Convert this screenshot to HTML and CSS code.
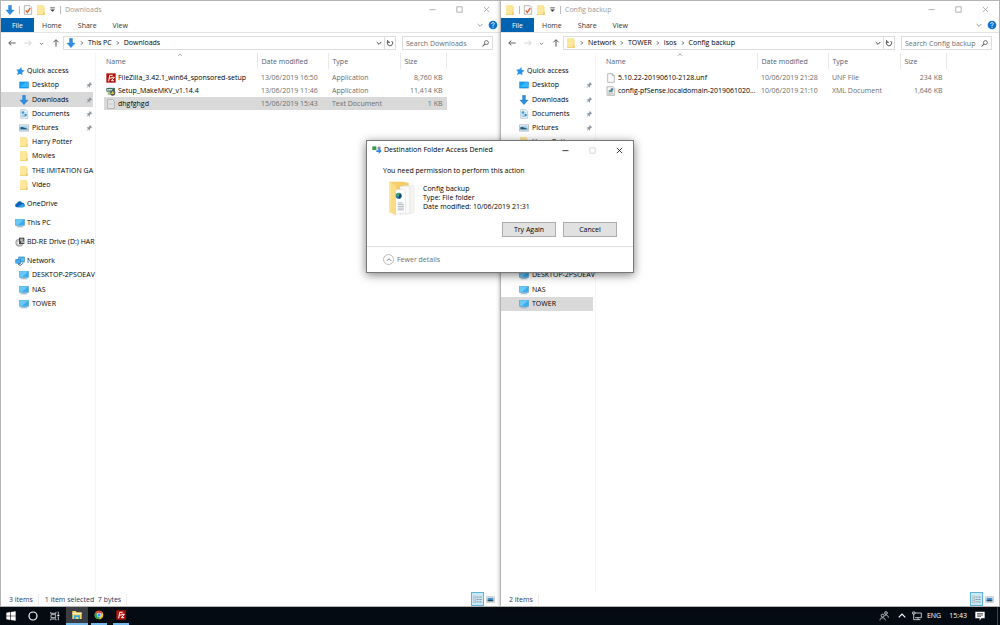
FILE: index.html
```html
<!DOCTYPE html>
<html lang="en">
<head>
<meta charset="utf-8">
<meta name="viewport" content="width=device-width, initial-scale=1">
<title>Destination Folder Access Denied</title>
<link rel="stylesheet" href="styles.css">
</head>
<body>
<svg class="defs" aria-hidden="true">
  <symbol id="i-down" viewBox="0 0 30 30"><path d="M10.500 1h9v14h8L15 29 2.500 15h8z" fill="#2f8de0" stroke="#1c74c4" stroke-width="1"/></symbol>
  <symbol id="i-check" viewBox="0 0 30 30"><path d="M4 2h17l5 5v21H4z" fill="#fafafa" stroke="#999" stroke-width="2"/><path d="M8 16l5 6 9-13" fill="none" stroke="#e2622d" stroke-width="4"/></symbol>
  <symbol id="i-folder" viewBox="0 0 30 30"><path d="M3 1h20v4h3v24H3z" fill="#fbdf88"/><path d="M3 1h19v21l4 5v2H3z" fill="#fde79b"/><path d="M3 28h23v1.500H3zM22 20l4 4v5h-4z" fill="#e9c257"/></symbol>
  <symbol id="i-more" viewBox="0 0 30 30"><path d="M5 6h20v4H5zM5 15h20L15 25z" fill="#333"/></symbol>
  <symbol id="i-min" viewBox="0 0 30 30"><path d="M5 15.500h20" stroke="currentColor" stroke-width="2.500"/></symbol>
  <symbol id="i-max" viewBox="0 0 30 30"><path d="M6 6h18v18H6z" fill="none" stroke="currentColor" stroke-width="2.500"/></symbol>
  <symbol id="i-close" viewBox="0 0 30 30"><path d="M6 6l18 18M24 6L6 24" fill="none" stroke="currentColor" stroke-width="2.500"/></symbol>
  <symbol id="i-chev-down" viewBox="0 0 30 30"><path d="M8 12l7 7 7-7" fill="none" stroke="currentColor" stroke-width="3"/></symbol>
  <symbol id="i-chev-up" viewBox="0 0 30 30"><path d="M8 18l7-7 7 7" fill="none" stroke="currentColor" stroke-width="2.500"/></symbol>
  <symbol id="i-chev-right" viewBox="0 0 12 30"><path d="M3 10l5 5-5 5" fill="none" stroke="#444" stroke-width="2.500"/></symbol>
  <symbol id="i-back" viewBox="0 0 30 30"><path d="M26 15H6M13 8l-8 7 8 7" fill="none" stroke="currentColor" stroke-width="2.800"/></symbol>
  <symbol id="i-fwd" viewBox="0 0 30 30"><path d="M4 15h20M17 8l8 7-8 7" fill="none" stroke="currentColor" stroke-width="2.500"/></symbol>
  <symbol id="i-up" viewBox="0 0 30 30"><path d="M15 26V6M7 13l8-8 8 8" fill="none" stroke="currentColor" stroke-width="3"/></symbol>
  <symbol id="i-help" viewBox="0 0 30 30"><circle cx="15" cy="15" r="13" fill="#0f74cf"/><path d="M11 12c0-6 8-5 8-1 0 3-4 3-4 7M15 20v3" fill="none" stroke="#fff" stroke-width="2.800"/></symbol>
  <symbol id="i-refresh" viewBox="0 0 30 30"><path d="M20 9a8 8 0 1 1-10 0M8 6v7h7" fill="none" stroke="#555" stroke-width="3"/></symbol>
  <symbol id="i-search" viewBox="0 0 30 30"><circle cx="18" cy="12" r="6.500" fill="none" stroke="#555" stroke-width="2.800"/><path d="M13 17l-8 8" stroke="#555" stroke-width="3.500"/></symbol>
  <symbol id="i-star" viewBox="0 0 30 30"><path d="M19 3l1 8 9 3-7 5 0 9-7-5-9 4 3-9-5-7 9-1z" fill="#2b93e6"/></symbol>
  <symbol id="i-pin" viewBox="0 0 30 30"><path d="M17 3l10 10-4 1-4 4-1 7-5-5-8 8 6-10-5-5 7-1 4-4z" fill="#8b97a1"/></symbol>
  <symbol id="i-desktop" viewBox="0 0 30 30"><path d="M1 5h28v20H1z" fill="#0a84dc"/><path d="M3 7h24v15H3z" fill="#13a3f5"/><path d="M3 22L19 7h8v15z" fill="#35b6fb"/></symbol>
  <symbol id="i-docs" viewBox="0 0 30 30"><path d="M5 2h15l6 6v20H5z" fill="#eef6fb" stroke="#8ba4b4" stroke-width="1.500"/><path d="M8 7h8v7H8z" fill="#3799d5"/><path d="M8 18h14M8 22h14M18 12h4" stroke="#58a6d3" stroke-width="2"/><path d="M17 15h6v6h-6z" fill="#3a8cc7"/></symbol>
  <symbol id="i-pics" viewBox="0 0 30 30"><path d="M1.500 5.500h27v19h-27z" fill="#fff" stroke="#a0a8ad" stroke-width="2"/><path d="M4 8h22v8H4z" fill="#a4d3f2"/><path d="M4 13l6-1 16 5v2H4z" fill="#34566b"/><path d="M4 18h22v4H4z" fill="#6aa9d2"/></symbol>
  <symbol id="i-cloud" viewBox="0 0 30 30"><path d="M7 25a6 6 0 0 1-1-12 8 8 0 0 1 15-2 7 7 0 0 1 2 14z" fill="#0864b8"/><path d="M7 25l14-10c6-1 9 3 8 7-1 2-3 3-5 3z" fill="#2d9ce8"/></symbol>
  <symbol id="i-pc" viewBox="0 0 30 30"><path d="M1 3h28v20H1z" fill="#4b8fb9"/><path d="M2 4h26v17H2z" fill="#36aef0"/><path d="M2 4h26L9 21H2z" fill="#6bc9fa"/><path d="M13 23h5v2h7v3H5v-3h8z" fill="#8fb4cb"/></symbol>
  <symbol id="i-disc" viewBox="0 0 30 30"><circle cx="13" cy="17" r="11" fill="#c6c8c9" stroke="#888" stroke-width="2"/><circle cx="12" cy="18" r="4" fill="#fff"/><path d="M12 2h16v19H12z" fill="#444"/><path d="M15 5h10v8H15z" fill="#aaa"/><path d="M18 14h9v3h-9z" fill="#eee"/></symbol>
  <symbol id="i-net" viewBox="0 0 30 30"><path d="M10 2h19v17H10z" fill="#277cae"/><path d="M12 4h15v13H12z" fill="#54bbef"/><path d="M1 10l16-2v17L1 22z" fill="#2a7fba"/><path d="M3 12l12-2v12L3 20z" fill="#42aced"/><path d="M9 25l8 3 8-7" fill="none" stroke="#45728f" stroke-width="3"/></symbol>
  <symbol id="i-fz" viewBox="0 0 30 30"><path d="M1 1h28v28H1z" fill="#b3130b"/><path d="M8 25l3-18h9M9 15h8M16 13h9l-9 10h8" fill="none" stroke="#fff" stroke-width="3"/></symbol>
  <symbol id="i-mkv" viewBox="0 0 30 30"><path d="M6 2h17v26H6z" fill="#dde6e8"/><path d="M1 6h26v11H1z" fill="#46705c"/><path d="M5 14V9l3 4 3-4v5M14 9v5M19 9l-4 3 4 3" fill="none" stroke="#fff" stroke-width="2"/><circle cx="20" cy="21" r="8" fill="#555"/><path d="M15 15l10 0 0 6z" fill="#3a78bd"/><path d="M14 24l11 0-5-8z" fill="#edc83f"/><path d="M5 18h8v8H5z" fill="#9fc57c"/></symbol>
  <symbol id="i-file" viewBox="0 0 30 30"><path d="M5 2h14l6 6v20H5z" fill="#fbfbfb" stroke="#929292" stroke-width="1.800"/><path d="M19 2v6h6" fill="none" stroke="#929292" stroke-width="1.800"/></symbol>
  <symbol id="i-text" viewBox="0 0 30 30"><path d="M5 2h15l5 5v21H5z" fill="#eee" stroke="#929292" stroke-width="1.800"/><path d="M8 9h14M8 13h14M8 17h14M8 21h14" stroke="#bbb" stroke-width="1.500"/></symbol>
  <symbol id="i-xml" viewBox="0 0 30 30"><path d="M3 2h18l5 5v21H3z" fill="#f7f7f7" stroke="#929292" stroke-width="1.800"/><path d="M8 12h12v6H8z" fill="#5a9b93"/><path d="M14 7h8v6h-8z" fill="#5b7891"/><path d="M6 21h16M6 24h16" stroke="#888" stroke-width="1.500"/></symbol>
  <symbol id="i-details" viewBox="0 0 30 30"><path d="M2 4h7v5H2zM2 12h7v5H2zM2 20h7v5H2z" fill="#fff" stroke="#7d8d96" stroke-width="1.500"/><path d="M12 7h7M21 7h8M12 15h7M21 15h8M12 23h7M21 23h8" stroke="#54656e" stroke-width="2"/></symbol>
  <symbol id="i-thumbs" viewBox="0 0 30 30"><path d="M1.500 5.500h27v19h-27z" fill="#fff" stroke="#aaa" stroke-width="2"/><path d="M5 9h20v12H5z" fill="#4a92d1"/><path d="M5 18l10-3 10 4v2H5z" fill="#274c5c"/></symbol>
  <symbol id="i-copy" viewBox="0 0 30 30"><path d="M1 4h12v11H1z" fill="#3b9c48"/><path d="M14 7h4v6h-4z" fill="#b5bfc5"/><path d="M18 5h8v9h-8z" fill="#8d989e"/><path d="M13 16h7v-6l9 8-9 9v-6h-7z" fill="#2589dc"/></symbol>
  <symbol id="i-bigfolder" viewBox="0 0 78 102"><path d="M3 2h42l15 4v85H12L3 86z" fill="#f2cd68"/><path d="M45 14l28-1 3 3v76l-25 6z" fill="#f3f3f2" stroke="#ddd"/><path d="M35 15h23l5 6v73l-28 4z" fill="#fafafa" stroke="#ccc"/><path d="M22 25h22l7 6v61l-29 4z" fill="#fff" stroke="#c8c8c8"/><path d="M28 64h14M28 69h18M28 74h18M28 79h18M28 84h18" stroke="#8998a6" stroke-width="2"/><path d="M3 2l20 10v88L3 91z" fill="#fbdc84"/><path d="M3 2l4 2v89l-4-2z" fill="#fde9a9"/><circle cx="31" cy="43" r="9" fill="#1f78b5"/><path d="M25 37c4-4 8-2 8 2l-4 8-5-4z" fill="#48a95b"/><path d="M32 40l6-1-2 10-5 3z" fill="#123e66"/></symbol>
  <symbol id="i-win" viewBox="0 0 30 30"><path d="M1 5l12-2v11H1zM15 3l14-2v13H15zM1 16h12v11L1 25zM15 16h14v13l-14-2z" fill="#fff"/></symbol>
  <symbol id="i-cortana" viewBox="0 0 30 30"><circle cx="15" cy="15" r="12" fill="none" stroke="#fff" stroke-width="3.500"/></symbol>
  <symbol id="i-tasks" viewBox="0 0 30 30"><path d="M2 3v4h16V3M3 11h14v9H3zM2 28v-4h16v4M25 2v8M25 18v10" fill="none" stroke="#ddd" stroke-width="2.500"/><path d="M22 11h6v5h-6z" fill="#fff"/></symbol>
  <symbol id="i-explorer" viewBox="0 0 30 30"><path d="M1 3h10l3 4h15v20H1z" fill="#f8d568"/><path d="M1 9h28v3H1z" fill="#fff0b4"/><path d="M6 16h18v11h-5v-6h-8v6H6z" fill="#2da9e8"/></symbol>
  <symbol id="i-chrome" viewBox="0 0 30 30"><circle cx="15" cy="15" r="13" fill="#f7c72e"/><path d="M15 15L3.700 8.500A13 13 0 0 1 26.300 8.500z" fill="#dc4437"/><path d="M15 15L3.700 8.500A13 13 0 0 0 15 28l5-10z" fill="#30a451"/><circle cx="15" cy="15" r="6.500" fill="#fff"/><circle cx="15" cy="15" r="5" fill="#4586ef"/></symbol>
  <symbol id="i-people" viewBox="0 0 30 30"><circle cx="11" cy="14" r="4.500" fill="none" stroke="#ddd" stroke-width="2.500"/><path d="M3 28c0-10 15-10 16 0" fill="none" stroke="#ddd" stroke-width="2.500"/><circle cx="21" cy="6" r="4" fill="none" stroke="#ddd" stroke-width="2.500"/><path d="M17 14c6-4 11 0 11 6" fill="none" stroke="#ddd" stroke-width="2.500"/></symbol>
  <symbol id="i-lan" viewBox="0 0 30 30"><path d="M9 6h19v14H9M18 20v6M11 26h14M2 3h7v6H2zM5 9v17h6" fill="none" stroke="#ddd" stroke-width="2.500"/></symbol>
  <symbol id="i-notes" viewBox="0 0 30 30"><path d="M1 2h28v20H19l-5 7v-7H1z" fill="#fff"/><path d="M6 8h18M6 12h18M6 16h12" stroke="#222" stroke-width="2"/></symbol>
</svg>

<div class="screen">
  <main class="desktop">
    <section class="window" aria-label="Downloads">
      <header class="titlebar">
        <svg class="ico"><use href="#i-down"/></svg><span class="bar"></span>
        <svg class="ico"><use href="#i-check"/></svg><svg class="ico"><use href="#i-folder"/></svg><svg class="ico small"><use href="#i-more"/></svg><span class="bar"></span>
        <span class="caption">Downloads</span>
        <div class="controls"><button aria-label="Minimise"><svg class="ico"><use href="#i-min"/></svg></button><button aria-label="Maximise"><svg class="ico"><use href="#i-max"/></svg></button><button aria-label="Close"><svg class="ico"><use href="#i-close"/></svg></button></div>
      </header>
      <div class="ribbon">
        <button class="file">File</button><button>Home</button><button>Share</button><button>View</button>
        <span class="ribbon-end"><button class="plain" aria-label="Expand ribbon"><svg class="ico"><use href="#i-chev-down"/></svg></button><button class="plain" aria-label="Help"><svg class="ico"><use href="#i-help"/></svg></button></span>
      </div>
      <div class="addressbar">
        <div class="history"><button class="plain" aria-label="Back"><svg class="ico"><use href="#i-back"/></svg></button><button class="plain faint" aria-label="Forward"><svg class="ico"><use href="#i-fwd"/></svg></button><button class="plain" aria-label="Recent"><svg class="ico small"><use href="#i-chev-down"/></svg></button><button class="plain" aria-label="Up"><svg class="ico"><use href="#i-up"/></svg></button></div>
        <div class="path"><svg class="ico"><use href="#i-down"/></svg><svg class="sep"><use href="#i-chev-right"/></svg><a href="#">This PC</a><svg class="sep"><use href="#i-chev-right"/></svg><a href="#">Downloads</a>
          <span class="path-end"><button class="plain" aria-label="Previous locations"><svg class="ico"><use href="#i-chev-down"/></svg></button><button class="plain refresh" aria-label="Refresh"><svg class="ico"><use href="#i-refresh"/></svg></button></span></div>
        <label class="search"><input type="search" placeholder="Search Downloads" aria-label="Search Downloads"><svg class="ico"><use href="#i-search"/></svg></label>
      </div>
      <div class="body">
        <nav class="tree" aria-label="Folders">
          <div class="group quick">
            <a class="root" href="#"><svg class="ico"><use href="#i-star"/></svg><span>Quick access</span></a>
            <a href="#"><svg class="ico"><use href="#i-desktop"/></svg><span>Desktop</span><svg class="pin"><use href="#i-pin"/></svg></a>
            <a class="selected" href="#"><svg class="ico"><use href="#i-down"/></svg><span>Downloads</span><svg class="pin"><use href="#i-pin"/></svg></a>
            <a href="#"><svg class="ico"><use href="#i-docs"/></svg><span>Documents</span><svg class="pin"><use href="#i-pin"/></svg></a>
            <a href="#"><svg class="ico"><use href="#i-pics"/></svg><span>Pictures</span><svg class="pin"><use href="#i-pin"/></svg></a>
            <a href="#"><svg class="ico"><use href="#i-folder"/></svg><span>Harry Potter</span></a>
            <a href="#"><svg class="ico"><use href="#i-folder"/></svg><span>Movies</span></a>
            <a href="#"><svg class="ico"><use href="#i-folder"/></svg><span>THE IMITATION GA</span></a>
            <a href="#"><svg class="ico"><use href="#i-folder"/></svg><span>Video</span></a>
          </div>
          <div class="group"><a class="root" href="#"><svg class="ico"><use href="#i-cloud"/></svg><span>OneDrive</span></a></div>
          <div class="group"><a class="root" href="#"><svg class="ico"><use href="#i-pc"/></svg><span>This PC</span></a></div>
          <div class="group"><a class="root" href="#"><svg class="ico"><use href="#i-disc"/></svg><span>BD-RE Drive (D:) HAR</span></a></div>
          <div class="group network">
            <a class="root" href="#"><svg class="ico"><use href="#i-net"/></svg><span>Network</span></a>
            <a href="#"><svg class="ico"><use href="#i-pc"/></svg><span>DESKTOP-2PSOEAV</span></a>
            <a href="#"><svg class="ico"><use href="#i-pc"/></svg><span>NAS</span></a>
            <a href="#"><svg class="ico"><use href="#i-pc"/></svg><span>TOWER</span></a>
          </div>
        </nav>
        <div class="files">
          <table>
            <colgroup><col class="c-name"><col class="c-date"><col class="c-type"><col class="c-size"></colgroup>
            <thead><tr><th>Name<svg class="sort"><use href="#i-chev-up"/></svg></th><th>Date modified</th><th>Type</th><th>Size</th></tr></thead>
            <tbody>
              <tr><td><div class="name"><svg class="ico"><use href="#i-fz"/></svg><span>FileZilla_3.42.1_win64_sponsored-setup</span></div></td><td>13/06/2019 16:50</td><td>Application</td><td>8,760 KB</td></tr>
              <tr><td><div class="name"><svg class="ico"><use href="#i-mkv"/></svg><span>Setup_MakeMKV_v1.14.4</span></div></td><td>13/06/2019 11:46</td><td>Application</td><td>11,414 KB</td></tr>
              <tr class="selected"><td><div class="name"><svg class="ico"><use href="#i-text"/></svg><span>dhgfghgd</span></div></td><td>15/06/2019 15:43</td><td>Text Document</td><td>1 KB</td></tr>
            </tbody>
          </table>
        </div>
      </div>
      <footer class="status"><span>3 items</span><span>1 item selected&nbsp; 7 bytes</span><div class="views"><button class="on" aria-label="Details view"><svg class="ico"><use href="#i-details"/></svg></button><button aria-label="Thumbnail view"><svg class="ico"><use href="#i-thumbs"/></svg></button></div></footer>
    </section>

    <section class="window" aria-label="Config backup">
      <header class="titlebar">
        <svg class="ico"><use href="#i-folder"/></svg><span class="bar"></span>
        <svg class="ico"><use href="#i-check"/></svg><svg class="ico"><use href="#i-folder"/></svg><svg class="ico small"><use href="#i-more"/></svg><span class="bar"></span>
        <span class="caption">Config backup</span>
        <div class="controls"><button aria-label="Minimise"><svg class="ico"><use href="#i-min"/></svg></button><button aria-label="Maximise"><svg class="ico"><use href="#i-max"/></svg></button><button aria-label="Close"><svg class="ico"><use href="#i-close"/></svg></button></div>
      </header>
      <div class="ribbon">
        <button class="file">File</button><button>Home</button><button>Share</button><button>View</button>
        <span class="ribbon-end"><button class="plain" aria-label="Expand ribbon"><svg class="ico"><use href="#i-chev-down"/></svg></button><button class="plain" aria-label="Help"><svg class="ico"><use href="#i-help"/></svg></button></span>
      </div>
      <div class="addressbar">
        <div class="history"><button class="plain" aria-label="Back"><svg class="ico"><use href="#i-back"/></svg></button><button class="plain faint" aria-label="Forward"><svg class="ico"><use href="#i-fwd"/></svg></button><button class="plain" aria-label="Recent"><svg class="ico small"><use href="#i-chev-down"/></svg></button><button class="plain" aria-label="Up"><svg class="ico"><use href="#i-up"/></svg></button></div>
        <div class="path"><svg class="ico"><use href="#i-folder"/></svg><svg class="sep"><use href="#i-chev-right"/></svg><a href="#">Network</a><svg class="sep"><use href="#i-chev-right"/></svg><a href="#">TOWER</a><svg class="sep"><use href="#i-chev-right"/></svg><a href="#">isos</a><svg class="sep"><use href="#i-chev-right"/></svg><a href="#">Config backup</a>
          <span class="path-end"><button class="plain" aria-label="Previous locations"><svg class="ico"><use href="#i-chev-down"/></svg></button><button class="plain refresh" aria-label="Refresh"><svg class="ico"><use href="#i-refresh"/></svg></button></span></div>
        <label class="search"><input type="search" placeholder="Search Config backup" aria-label="Search Config backup"><svg class="ico"><use href="#i-search"/></svg></label>
      </div>
      <div class="body">
        <nav class="tree" aria-label="Folders">
          <div class="group quick">
            <a class="root" href="#"><svg class="ico"><use href="#i-star"/></svg><span>Quick access</span></a>
            <a href="#"><svg class="ico"><use href="#i-desktop"/></svg><span>Desktop</span><svg class="pin"><use href="#i-pin"/></svg></a>
            <a href="#"><svg class="ico"><use href="#i-down"/></svg><span>Downloads</span><svg class="pin"><use href="#i-pin"/></svg></a>
            <a href="#"><svg class="ico"><use href="#i-docs"/></svg><span>Documents</span><svg class="pin"><use href="#i-pin"/></svg></a>
            <a href="#"><svg class="ico"><use href="#i-pics"/></svg><span>Pictures</span><svg class="pin"><use href="#i-pin"/></svg></a>
            <a href="#"><svg class="ico"><use href="#i-folder"/></svg><span>Harry Potter</span></a>
            <a href="#"><svg class="ico"><use href="#i-folder"/></svg><span>Movies</span></a>
            <a href="#"><svg class="ico"><use href="#i-folder"/></svg><span>THE IMITATION GA</span></a>
            <a href="#"><svg class="ico"><use href="#i-folder"/></svg><span>Video</span></a>
          </div>
          <div class="group"><a class="root" href="#"><svg class="ico"><use href="#i-cloud"/></svg><span>OneDrive</span></a></div>
          <div class="group"><a class="root" href="#"><svg class="ico"><use href="#i-pc"/></svg><span>This PC</span></a></div>
          <div class="group"><a class="root" href="#"><svg class="ico"><use href="#i-disc"/></svg><span>BD-RE Drive (D:) HAR</span></a></div>
          <div class="group network">
            <a class="root" href="#"><svg class="ico"><use href="#i-net"/></svg><span>Network</span></a>
            <a href="#"><svg class="ico"><use href="#i-pc"/></svg><span>DESKTOP-2PSOEAV</span></a>
            <a href="#"><svg class="ico"><use href="#i-pc"/></svg><span>NAS</span></a>
            <a class="selected" href="#"><svg class="ico"><use href="#i-pc"/></svg><span>TOWER</span></a>
          </div>
        </nav>
        <div class="files">
          <table>
            <colgroup><col class="c-name"><col class="c-date"><col class="c-type"><col class="c-size"></colgroup>
            <thead><tr><th>Name<svg class="sort"><use href="#i-chev-up"/></svg></th><th>Date modified</th><th>Type</th><th>Size</th></tr></thead>
            <tbody>
              <tr><td><div class="name"><svg class="ico"><use href="#i-file"/></svg><span>5.10.22-20190610-2128.unf</span></div></td><td>10/06/2019 21:28</td><td>UNF File</td><td>234 KB</td></tr>
              <tr><td><div class="name"><svg class="ico"><use href="#i-xml"/></svg><span>config-pfSense.localdomain-2019061020...</span></div></td><td>10/06/2019 21:10</td><td>XML Document</td><td>1,646 KB</td></tr>
            </tbody>
          </table>
        </div>
      </div>
      <footer class="status"><span>2 items</span><div class="views"><button class="on" aria-label="Details view"><svg class="ico"><use href="#i-details"/></svg></button><button aria-label="Thumbnail view"><svg class="ico"><use href="#i-thumbs"/></svg></button></div></footer>
    </section>

    <section class="dialog" role="dialog" aria-labelledby="dialog-title">
      <header class="dialog-title"><svg class="ico"><use href="#i-copy"/></svg><span id="dialog-title">Destination Folder Access Denied</span>
        <div class="controls"><button aria-label="Minimise"><svg class="ico"><use href="#i-min"/></svg></button><button disabled aria-label="Maximise"><svg class="ico"><use href="#i-max"/></svg></button><button aria-label="Close"><svg class="ico"><use href="#i-close"/></svg></button></div>
      </header>
      <div class="dialog-body">
        <p>You need permission to perform this action</p>
        <div class="item"><svg class="big"><use href="#i-bigfolder"/></svg><div>Config backup<br>Type: File folder<br>Date modified: 10/06/2019 21:31</div></div>
        <div class="actions"><button>Try Again</button><button>Cancel</button></div>
      </div>
      <footer class="dialog-foot"><button class="plain fewer"><span class="ring"><svg class="ico"><use href="#i-chev-up"/></svg></span>Fewer details</button></footer>
    </section>
  </main>

  <footer class="taskbar">
    <div class="apps">
      <button aria-label="Start"><svg class="ico"><use href="#i-win"/></svg></button><button aria-label="Cortana"><svg class="ico"><use href="#i-cortana"/></svg></button><button aria-label="Task view"><svg class="ico"><use href="#i-tasks"/></svg></button><button class="open active" aria-label="File Explorer"><svg class="ico"><use href="#i-explorer"/></svg></button><button class="open" aria-label="Chrome"><svg class="ico"><use href="#i-chrome"/></svg></button><button class="open" aria-label="FileZilla"><svg class="ico"><use href="#i-fz"/></svg></button>
    </div>
    <div class="tray">
      <svg class="ico"><use href="#i-people"/></svg><svg class="more-icons"><use href="#i-chev-up"/></svg><svg class="ico lan"><use href="#i-lan"/></svg><span>ENG</span><time>15:43</time><svg class="ico notes"><use href="#i-notes"/></svg>
    </div>
  </footer>
</div>
</body>
</html>
```

FILE: styles.css
```css
* { box-sizing: border-box; }
body { margin: 0; font: 7px/10px "Open Sans", "Noto Sans", sans-serif; color: #000; background: #fff; }
button, input { font: inherit; color: inherit; }
button { border: 0; padding: 0; background: none; display: inline-flex; align-items: center; justify-content: center; }
a { color: inherit; text-decoration: none; }
svg { display: block; flex: none; }
.defs { position: absolute; width: 0; height: 0; }
.ico { width: 10px; height: 10px; }
.ico.small { width: 7px; height: 7px; }

.screen { min-height: 100vh; display: flex; flex-direction: column; }
.desktop { position: relative; flex: 1; display: grid; grid-template-columns: 1fr 1fr; }
.window { display: flex; flex-direction: column; min-width: 0; background: #fff; border: 1px solid #b4b4b4; border-width: 1px 0 1px 1px; }
.window + .window { border-right-width: 1px; box-shadow: 0 0 4px rgba(0, 0, 0, .35); }

.titlebar { display: flex; align-items: center; height: 17px; gap: 3px; padding-left: 4px; color: #999; }
.bar { width: 1px; height: 8px; background: #bbb; margin-left: 1px; }
.caption { padding-left: 1px; }
.controls { display: flex; margin-left: auto; }
.controls button { width: 27px; height: 17px; }
.controls .ico { width: 9px; height: 9px; }

.ribbon { display: flex; align-items: stretch; height: 15px; border-bottom: 1px solid #e4e4e4; color: #333; }
.ribbon > button { padding: 1px 8px 0; }
.ribbon > .file { width: 33px; padding: 1px 0 0; background: #0063b1; color: #fff; }
.ribbon-end { margin-left: auto; display: flex; gap: 3px; padding-right: 2px; color: #999; }

.addressbar { display: flex; align-items: center; height: 20px; padding-right: 7px; }
.history { width: 62px; display: flex; justify-content: space-between; padding: 0 2px 0 6px; color: #555; }
.faint { color: #ccc; }
.path { flex: 1; display: flex; align-items: center; gap: 4px; height: 14px; border: 1px solid #ddd; padding-left: 2px; }
.sep { width: 4px; height: 10px; }
.path-end { display: flex; margin-left: auto; align-self: stretch; color: #444; }
.refresh { border-left: 1px solid #ddd; }
.search { display: flex; align-items: center; width: 91px; height: 14px; margin-left: 6px; padding: 0 2px 0 3px; border: 1px solid #ddd; }
.search input { flex: 1; min-width: 0; height: 12px; border: 0; padding: 0; background: none; outline: 0; appearance: none; }
.search input::placeholder { color: #6d6d6d; opacity: 1; }
.search input::-webkit-search-cancel-button { display: none; }
.search .ico { width: 9px; height: 9px; }

.body { flex: 1; display: flex; min-height: 0; }
.tree { width: 95px; padding: 11px 2px 0 0; border-right: 1px solid #f5f5f5; display: flex; flex-direction: column; gap: 5px; }
.group { display: grid; grid-auto-rows: 1fr; min-height: 14px; }
.quick { height: 128px; }
.network { height: 57px; }
.tree a { display: flex; align-items: center; gap: 3px; padding-left: 18px; min-width: 0; }
.tree a.root { padding-left: 14px; gap: 2px; }
.tree a span { flex: 1; min-width: 0; white-space: nowrap; }
.pin { width: 8px; height: 8px; }
.selected { background: #d9d9d9; }

.files { flex: 1; min-width: 0; padding-left: 8px; }
table { border-collapse: collapse; table-layout: fixed; width: 343px; max-width: 100%; }
.c-name { width: 153px; }
.c-date { width: 71px; }
.c-type { width: 72px; }
th { height: 16px; padding: 1px 0 0 4px; text-align: left; font-weight: 400; color: #4c607a; border-right: 1px solid #e8e8e8; }
th:first-child { position: relative; padding-left: 2px; }
.sort { position: absolute; left: 47%; top: -2px; width: 8px; height: 8px; color: #777; }
thead::after { content: ""; display: block; height: 2px; }
td { height: 13px; padding: 0 0 0 4px; color: #6d6d6d; white-space: nowrap; }
td:first-child { padding-left: 2px; color: #000; }
td:last-child { text-align: right; padding-right: 4px; }
.name { display: flex; align-items: center; gap: 2px; }

.status { display: flex; align-items: center; height: 14px; gap: 6px; padding: 0 3px 0 8px; color: #2a3a5c; }
.status > span { padding: 1px 5px 0 0; border-right: 1px solid #eee; }
.views { display: flex; margin-left: auto; }
.views button { width: 13px; height: 14px; }
.views .on { background: #cbe8f6; border: 1px solid #5db5dc; }
.views .ico { width: 9px; height: 9px; }

.dialog { position: absolute; left: 50%; top: 140px; width: 268px; transform: translateX(-50%); background: #fff; border: 1px solid #777; box-shadow: 0 2px 9px rgba(0, 0, 0, .5); }
.dialog-title { display: flex; align-items: center; gap: 2px; height: 18px; padding-left: 5px; }
.dialog-title button:disabled { color: #ccc; }
.dialog-body { padding: 7px 16px 9px; }
.dialog-body p { margin: 0 0 5px; }
.item { display: flex; gap: 8px; padding-left: 5px; line-height: 9px; }
.item > div { padding-top: 3px; }
.big { width: 27px; height: 35px; }
.actions { display: flex; justify-content: flex-end; gap: 7px; margin-top: 6px; }
.actions button { width: 54px; height: 15px; background: #e1e1e1; border: 1px solid #adadad; }
.dialog-foot { height: 26px; display: flex; align-items: center; padding-left: 16px; border-top: 1px solid #dfdfdf; color: #6d6d6d; }
.fewer { gap: 3px; }
.ring { display: flex; width: 11px; height: 11px; align-items: center; justify-content: center; border: 1px solid #bbb; border-radius: 50%; }

.taskbar { display: flex; justify-content: space-between; height: 18px; background: #050b12; color: #fff; }
.apps, .tray { display: flex; align-items: center; }
.apps button { width: 22px; height: 18px; }
.apps .open { border-bottom: 2px solid #76b9ed; width: 16px; margin: 0 3px; }
.apps .open.active { width: 22px; margin: 0; background: #3a3e44; }
.tray { gap: 8px; margin-right: 2px; padding-right: 12px; border-right: 1px solid #444; }
.more-icons { width: 14px; height: 14px; margin: 0 -2px; }
.lan { margin: 0 -3px; }
```
